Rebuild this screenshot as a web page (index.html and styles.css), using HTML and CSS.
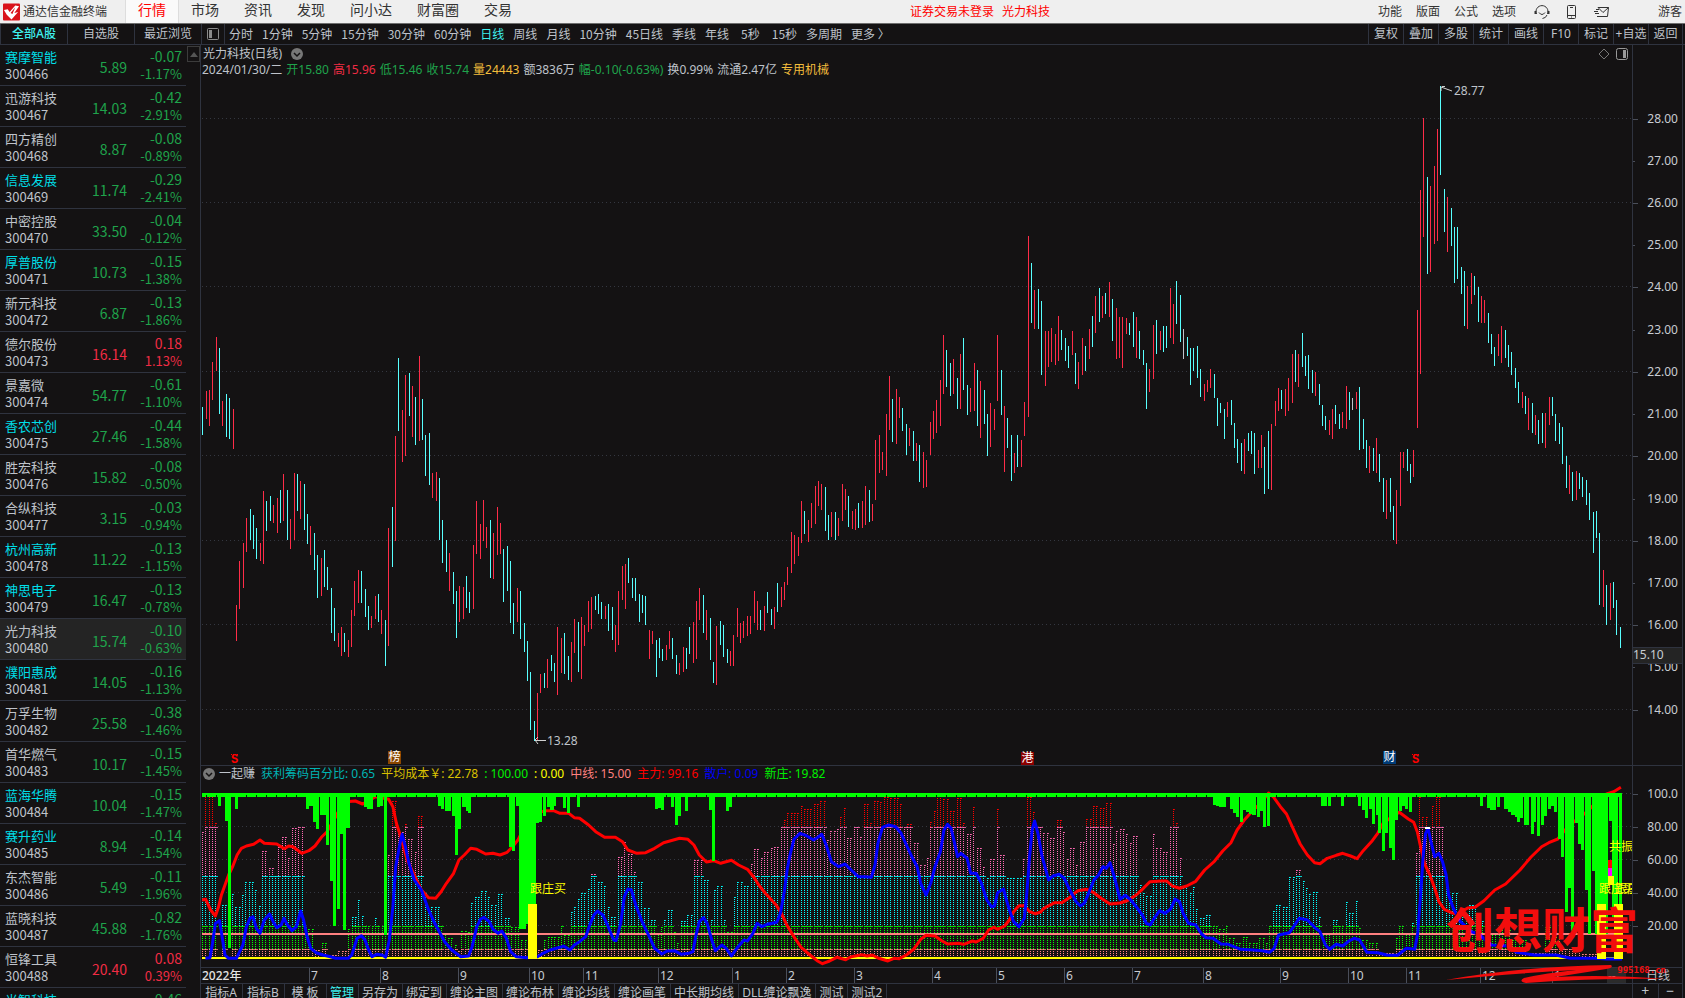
FILE: index.html
```html
<!DOCTYPE html>
<html lang="zh-CN">
<head>
<meta charset="utf-8">
<title>通达信金融终端</title>
<link rel="stylesheet" href="styles.css">
</head>
<body>
<div class="app">
  <header class="topbar">
    <div class="brand">
      <svg class="logo" viewBox="0 0 18 18"><rect width="18" height="18" rx="1" fill="#d9121a"/><path d="M1 7 5 6 7 9 13 2 17 3 12 10 16 9 9 17 4 12Z" fill="#fff"/><path d="M8 10 13 4 10 11Z" fill="#d9121a"/></svg>
      <span>通达信金融终端</span>
    </div>
    <nav class="menu">
      <a href="#" class="on">行情</a><a href="#">市场</a><a href="#">资讯</a><a href="#">发现</a><a href="#">问小达</a><a href="#">财富圈</a><a href="#">交易</a>
    </nav>
    <div class="notice"><span>证券交易未登录</span><span>光力科技</span></div>
    <div class="tools">
      <button>功能</button><button>版面</button><button>公式</button><button>选项</button>
    </div>
    <div class="icons">
      <button aria-label="客服"><svg width="16" height="16" viewBox="0 0 16 16" fill="none" stroke="#333"><path d="M2.500 10a6 6 0 1 1 11 0M13 11q-1 3-4.500 3.500M5 8.500q3 4 6 0"/><path d="M1.500 7v3M14.500 7v3" stroke-width="2"/></svg></button>
      <button aria-label="手机"><svg width="16" height="16" viewBox="0 0 16 16" fill="none" stroke="#333"><rect x="3.500" y="1.500" width="8" height="13" rx="1"/><path d="M3.500 11.500h8M6 3.500h3M7 13h1"/></svg></button>
      <button aria-label="邮件"><svg width="16" height="16" viewBox="0 0 16 16" fill="none" stroke="#333"><path d="M4 3.500h10.500l-1 9H3M4 3.500l5 5 5.500-5M0 7.500h4M2 5.500h3M1 9.500h4"/></svg></button>
    </div>
    <a href="#" class="guest">游客</a>
  </header>

  <div class="toolbar">
    <div class="side-tabs"><button class="on">全部A股</button><button>自选股</button><button>最近浏览</button></div>
    <button class="panel-toggle" aria-label="侧栏"><svg width="12" height="12" viewBox="0 0 12 12"><rect x=".5" y=".5" width="11" height="11" rx="1" fill="none" stroke="#8a8a8a"/><path d="M2 2h3v8H2z" fill="#8a8a8a"/></svg></button>
    <nav class="periods">
      <button>分时</button><button>1分钟</button><button>5分钟</button><button>15分钟</button><button>30分钟</button><button>60分钟</button><button class="on">日线</button><button>周线</button><button>月线</button><button>10分钟</button><button>45日线</button><button>季线</button><button>年线</button><button class="sec">5秒</button><button class="sec">15秒</button><button>多周期</button><button>更多 〉</button>
    </nav>
    <div class="actions"><button>复权</button><button>叠加</button><button>多股</button><button>统计</button><button>画线</button><button>F10</button><button>标记</button><button>+自选</button><button>返回</button></div>
  </div>

  <main class="work">
    <aside class="sidebar">
      <table class="stocks"><tbody id="stocks"></tbody></table>
      <button class="scroll-up" aria-label="向上滚动"><svg width="8" height="5" viewBox="0 0 8 5"><path d="M4 0 8 5H0z" fill="#555"/></svg></button>
    </aside>

    <section class="charts">
      <div class="price pane">
        <svg class="plot" id="price" viewBox="0 0 1431 720" preserveAspectRatio="none"></svg>
        <div class="labels" id="price-labels"></div>
        <div class="head">
          <div class="title"><span>光力科技(日线)</span><button aria-label="展开" class="round"><svg width="12" height="12" viewBox="0 0 12 12"><circle cx="6" cy="6" r="6" fill="#777"/><path d="M3 5l3 3 3-3" fill="none" stroke="#141213" stroke-width="1.500"/></svg></button></div>
          <div class="corner"><svg width="12" height="12" viewBox="0 0 12 12"><path d="M6 1l5 5-5 5-5-5z" fill="none" stroke="#777"/></svg><svg width="12" height="12" viewBox="0 0 12 12"><rect x=".5" y=".5" width="11" height="11" rx="2" fill="none" stroke="#999"/><path d="M7 2h3v8H7z" fill="#999"/></svg></div>
        </div>
        <div class="quote"><span>2024/01/30/二</span><span class="down">开15.80</span><span class="up">高15.96</span><span class="down">低15.46</span><span class="down">收15.74</span><span class="gold">量24443</span><span>额3836万</span><span class="down">幅-0.10(-0.63%)</span><span>换0.99%</span><span>流通2.47亿</span><span class="gold">专用机械</span></div>
      </div>
      <div class="scale price-scale" id="price-scale"></div>

      <div class="indicator pane">
        <svg class="plot" id="indicator" viewBox="0 0 1431 201" preserveAspectRatio="none"></svg>
        <div class="labels" id="indicator-labels"></div>
        <div class="legend"><button aria-label="展开" class="round"><svg width="12" height="12" viewBox="0 0 12 12"><circle cx="6" cy="6" r="6" fill="#777"/><path d="M3 5l3 3 3-3" fill="none" stroke="#141213" stroke-width="1.500"/></svg></button><span>一起赚</span><span class="teal">获利筹码百分比: 0.65</span><span class="mustard">平均成本￥: 22.78</span><span class="lime">: 100.00</span><span class="yellow">: 0.00</span><span class="salmon">中线: 15.00</span><span class="red">主力: 99.16</span><span class="blue">散户: 0.09</span><span class="lime">新庄: 19.82</span></div>
      </div>
      <div class="scale indicator-scale" id="indicator-scale"></div>

      <div class="dates" id="dates"></div>
      <div class="period-name">日线</div>

      <nav class="templates"><button class="wide">指标A</button><button class="wide">指标B</button><button class="wide">模 板</button><button class="on">管理</button><button>另存为</button><button>绑定到</button><button>缠论主图</button><button>缠论布林</button><button>缠论均线</button><button>缠论画笔</button><button>中长期均线</button><button>DLL缠论飘逸</button><button>测试</button><button>测试2</button></nav>
      <div class="zoomers"><button>+</button><button>−</button></div>

      <div class="stamp">
        <svg class="swoosh" viewBox="0 0 220 20" preserveAspectRatio="none"><path d="M0 16Q80 2 165 1 168 4 160 5 130 10 108 13 160 10 220 15 150 14 80 19 72 17 78 14 100 9 130 6 60 10 0 16Z" fill="#f20d0d"/></svg>
        <span class="stamp-name">创想财富</span><span class="stamp-site">995168.cn</span>
      </div>
    </section>
    <div class="edge"></div>
  </main>
</div>
<script src="app.js"></script>
</body>
</html>
```
FILE: styles.css
```css
* { box-sizing: border-box; }
:root {
  --bg: #141213;
  --line: #2f333f;
  --text: #bfc3ca;
  --up: #f02c44;
  --down: #1fa34b;
  --cyan: #3ff0ee;
}
html, body { margin: 0; height: 100%; overflow: hidden; }
body {
  background: var(--bg);
  color: var(--text);
  font: 12px/16px "Noto Sans", "Noto Sans CJK SC", sans-serif;
}
button {
  margin: 0; padding: 0; border: 0;
  background: none; color: inherit; font: inherit; white-space: nowrap;
}
a { color: inherit; text-decoration: none; }
svg { display: block; }
.app { height: 100vh; display: flex; flex-direction: column; }

.topbar {
  flex: none; height: 24px; display: flex; align-items: center;
  background: #efefef; color: #333; border-bottom: 1px solid #6d6d6d;
}
.brand { flex: none; width: 125px; padding-left: 3px; display: flex; align-items: center; gap: 3px; line-height: 20px; }
.logo { width: 17px; height: 18px; }
.menu { display: flex; height: 100%; font-size: 14px; line-height: 20px; }
.menu a { padding: 0 13px 0 12px; }
.menu .on { padding-left: 13px; background: #fafafa; color: #f00; box-shadow: inset 1px 0 #ddd, inset -1px 0 #ddd; }
.notice { margin-left: auto; display: flex; gap: 8px; color: #f00; }
.tools { margin-left: 328px; display: flex; gap: 14px; }
.icons { display: flex; gap: 14px; margin-left: 18px; }
.guest { margin: 0 3px 0 48px; }

.toolbar { flex: none; height: 21px; display: flex; border-bottom: 1px solid var(--line); }
.toolbar button { padding-bottom: 1px; }
.side-tabs { width: 201px; display: grid; grid-template-columns: repeat(3, 1fr); }
.side-tabs button { border-left: 1px solid var(--line); }
.side-tabs .on { color: var(--cyan); font-weight: 500; }
.toolbar .panel-toggle { width: 24px; padding-left: 5px; border: solid var(--line); border-width: 0 1px; }
.periods { display: flex; gap: 9px; padding-left: 4px; font-family: "Noto Sans CJK SC", sans-serif; }
.periods .on { color: var(--cyan); }
.periods .sec { padding-left: 3px; }
.actions { margin: 0 2px 0 auto; display: grid; grid-template-columns: repeat(9, 35px); }
.actions button { border-left: 1px solid var(--line); }
.actions button:last-child { border-right: 1px solid var(--line); }

.work { flex: 1; min-height: 0; display: flex; }
.sidebar { flex: none; width: 201px; overflow: hidden; display: flex; align-items: flex-start; border-right: 1px solid var(--line); }
.stocks { width: 186px; border-collapse: separate; border-spacing: 0; table-layout: fixed; font-family: "Noto Sans CJK SC", sans-serif; }
.stocks tr { height: 41px; }
.stocks td { padding: 0; vertical-align: middle; border-bottom: 1px solid var(--line); }
.stocks .who { width: 80px; padding: 0 0 1px 5px; font-size: 13px; line-height: 17px; }
.stocks .price-cell { width: 47px; font-size: 14px; line-height: 20px; text-align: right; padding-top: 4px; }
.stocks .move { padding: 0 4px 1px 0; font-size: 14px; line-height: 18px; text-align: right; }
.stocks .pct { font-size: 13px; }
.stocks .who div, .stocks .move div { white-space: nowrap; }
.hot { color: #00dfe8; }
.selected { background: #242424; }
.up { color: var(--up); }
.down { color: var(--down); }
.gold { color: #f3bd3c; }
.teal { color: #00b4b4; }
.mustard { color: #d9c000; }
.lime { color: #00f000; }
.yellow { color: #ff0; }
.salmon { color: #ff8080; }
.red { color: #f00; }
.blue { color: #0000f0; }
.scroll-up { width: 13px; height: 16px; margin: 1px 0 0 1px; border: 1px solid #3c3c3c; display: grid; place-items: center; }

.charts {
  flex: 1; min-width: 0; position: relative; display: grid;
  grid-template: minmax(0, 720fr) minmax(0, 202fr) 17px 14px / minmax(0, 1fr) 51px;
}
.pane { position: relative; overflow: hidden; }
.plot { position: absolute; inset: 0; width: 100%; height: 100%; }
.labels { position: absolute; inset: 0; }
.labels span { position: absolute; white-space: nowrap; line-height: 16px; margin-top: -8px; }
.labels .badge { width: 13px; height: 13px; margin: 0; color: #fff; text-align: center; line-height: 12px; }
.brown { background: #8a4600; }
.maroon { background: #8a0000; }
.navy { background: #003c78; }
.labels .bonus { color: #f00; font: bold 12px/10px "Liberation Mono", monospace; margin: 0; border-top: 1px dotted #f00; }
.head { position: relative; display: flex; justify-content: space-between; padding: 1px 4px 0 2px; }
.title { display: flex; align-items: center; gap: 9px; }
.corner { display: flex; align-items: center; gap: 6px; }
.quote { position: relative; display: flex; gap: 4px; padding-left: 1px; white-space: nowrap; }
.legend { position: relative; display: flex; align-items: center; gap: 6px; padding-left: 2px; white-space: nowrap; }
.legend .round { margin-right: -2px; }
.indicator { border-top: 1px solid var(--line); }
.scale { position: relative; overflow: hidden; border: 0 solid var(--line); border-width: 0 1px; color: #c8ccd2; }
.indicator-scale { border-top-width: 1px; }
.scale span { position: absolute; right: 4px; margin-top: -8px; line-height: 16px; }
.scale i { position: absolute; left: 0; width: 5px; height: 1px; background: #4a4e59; }
.scale i.minor { width: 2px; }
.scale .last { left: 0; right: 0; height: 17px; margin-top: -8px; border: solid var(--line); border-width: 1px 0; background: #242424; line-height: 14px; }
.dates { position: relative; overflow: hidden; border: solid var(--line); border-width: 1px 0; color: #c8ccd2; }
.dates span { position: absolute; height: 16px; line-height: 15px; padding-left: 1px; border-left: 1px solid #4a4e59; }
.dates .year { border: 0; color: #e4e4e4; font-weight: 500; }
.dates .cursor { width: 19px; border: 0; background: #2b2b2b; }
.period-name { border: 1px solid var(--line); padding-left: 13px; line-height: 15px; }
.templates { display: flex; overflow: hidden; }
.templates button { height: 18px; padding: 0 4px 0 3px; border-right: 1px solid var(--line); line-height: 16px; }
.templates .wide { width: 42px; }
.templates .on { color: var(--cyan); }
.zoomers { display: grid; grid-template-columns: 1fr 1fr; overflow: hidden; border: 0 solid var(--line); border-width: 0 1px; }
.zoomers button { height: 14px; line-height: 14px; font-size: 14px; }
.zoomers button + button { border-left: 1px solid var(--line); }
.edge { flex: none; width: 2px; }

.stamp { position: absolute; right: 1px; bottom: 14px; width: 236px; height: 84px; color: #f20d0d; }
.stamp-name { position: absolute; left: 0; top: 0; font-size: 48px; font-weight: 700; line-height: 60px; white-space: nowrap; }
.stamp-site { position: absolute; right: 16px; top: 63px; font: bold 9px/14px "DejaVu Sans Mono", monospace; }
.swoosh { position: absolute; left: 0; bottom: 0; width: 220px; height: 20px; }
```
FILE: app.js
```javascript
const NS = 'http://www.w3.org/2000/svg';
const byId = id => document.getElementById(id);

/* Stock list: name, price, change, percent; * marks a highlighted name. */
const stocks = `*赛摩智能 5.89 -0.07 -1.17%|迅游科技 14.03 -0.42 -2.91%|四方精创 8.87 -0.08 -0.89%|*信息发展 11.74 -0.29 -2.41%|中密控股 33.50 -0.04 -0.12%|*厚普股份 10.73 -0.15 -1.38%|新元科技 6.87 -0.13 -1.86%|德尔股份 16.14 0.18 1.13%|景嘉微 54.77 -0.61 -1.10%|*香农芯创 27.46 -0.44 -1.58%|胜宏科技 15.82 -0.08 -0.50%|合纵科技 3.15 -0.03 -0.94%|*杭州高新 11.22 -0.13 -1.15%|*神思电子 16.47 -0.13 -0.78%|光力科技 15.74 -0.10 -0.63%|*濮阳惠成 14.05 -0.16 -1.13%|万孚生物 25.58 -0.38 -1.46%|首华燃气 10.17 -0.15 -1.45%|*蓝海华腾 10.04 -0.15 -1.47%|*赛升药业 8.94 -0.14 -1.54%|东杰智能 5.49 -0.11 -1.96%|蓝晓科技 45.88 -0.82 -1.76%|恒锋工具 20.40 0.08 0.39%|*光智科技 19.62 -0.46 -2.29%`;
byId('stocks').innerHTML = stocks.split('|').map((row, i) => {
  const [name, price, diff, pct] = row.split(' ');
  const hot = name[0] === '*';
  const dir = diff[0] === '-' ? 'down' : 'up';
  const code = 300466 + i;
  return `<tr class="${code === 300480 ? 'selected' : ''}"><td class="who"><div class="${hot ? 'hot' : ''}">${name.replace('*', '')}</div><div>${code}</div></td><td class="price-cell ${dir}">${price}</td><td class="move ${dir}"><div>${diff}</div><div class="pct">${pct}</div></td></tr>`;
}).join('');

/* Series are stored in blocks; each has an origin and a number of units per pixel. */
const LEFT = 201;
const blocks = (list, top) => list.flatMap(b => b.data.trim().split(/\s*,\s*/).map(s => {
  const m = s.match(/^([a-z]?)(.*)$/);
  const n = m[2].trim().split(/\s+/).map(Number);
  return { kind: m[1], n, x: v => b.x - LEFT + v / b.k, y: v => b.y - top + v / 3 };
}));
function path(svg, d, attrs) {
  const p = document.createElementNS(NS, 'path');
  p.setAttribute('d', d);
  for (const k in attrs) p.setAttribute(k, attrs[k]);
  svg.appendChild(p);
}

/* Price pane */
const price = byId('price');
const priceY = v => 118.5 - 45 + (28 - v) * 42.23;
for (let v = 28; v >= 14; v -= 2) path(price, `M1 ${Math.round(priceY(v)) - .5}H1431`, { stroke: '#343740', 'stroke-dasharray': '1 3' });
const bars = blocks([
{ x: 0, y: 320, k: 2.8, data: `c567 261 345,r578 213 297,r586 210 318,r595 126 240,r606 51 153,c614 84 282,r623 243 318,c634 222 351,c642 234 357,r653 267 387,r662 855 963,r670 723 867,r681 669 804,r690 594 696,c701 567 660,c709 585 687,c718 624 717,r729 669 723,r738 513 732,c746 543 633,c757 528 603,r765 555 609,r777 534 639,c785 510 609,r793 462 603,c805 510 660,r813 597 687,r824 459 660,c832 462 573,r841 483 597,c852 492 630,c861 582 672,r869 618 705,c880 639 750,c889 705 834,r900 714 828,c908 690 801,c917 741 810,c928 804 939,c936 864 963,r947 939 981,r956 921 1008,c964 939 996,r975 960 1011,r984 870 981,r992 783 888,r1003 750 849,c1012 753 849,c1023 807 891,c1031 858 930,r1040 888 924,r1051 828 897,c1059 822 906,r1068 870 942,c1079 900 1038,r1087 624 978,c1099 561 741,r1107 348 663,c1115 114 333,r1127 270 426,r1135 165 408,c1146 159 288,r1155 198 351,c1163 231 375,r1174 108 363,c1183 237 360,c1191 345 468,c1202 339 495,r1211 459 534,r1222 456 543,c1230 474 660,c1239 600 729,c1250 660 756,r1258 699 813,c1269 756 852,c1278 813 954,r1286 798 906,r1297 801 897,c1306 768 864,c1314 816 879,r1325 675 867,r1334 543 702,r1345 612 717,r1353 540 663,r1362 621 684,c1373 600 774,r1381 639 777,r1393 561 705,r1401 609 702,c1409 687 846,c1421 678 813,c1429 723 909,c1437 849 942,r1449 804 906,c1457 813 957,c1468 909 996,c1477 963 1083,c1485 1056 1230,c1496 1203 1263,r1505 1119 1260,r1513 1062 1119,c1524 1059 1104,r1532 1017 1104,c1544 1005 1053,c1552 1029 1086,r1561 921 1125` },
{ x: 560, y: 400, k: 2.8, data: `r4 714 819,c12 699 822,c24 768 840,r32 726 846,r40 657 759,c51 666 816,r60 651 837,r68 675 738,r79 603 696,r88 591 687,c99 588 630,c107 582 642,c116 606 657,r127 618 657,c135 612 693,c147 621 720,r155 675 756,r163 573 735,r175 498 600,r183 492 627,c191 474 549,c203 534 594,c211 534 603,c222 582 666,c231 585 639,c239 588 675,r250 690 777,r259 693 732,c270 720 831,c278 714 774,c287 747 783,r298 735 780,r306 693 747,c315 714 777,c326 765 822,r334 789 825,r345 741 816,c354 744 807,c362 681 762,r373 666 789,r382 603 777,r390 564 660,c401 585 699,r410 630 720,c421 654 780,c429 786 849,r438 678 855,c449 663 735,c457 675 771,c469 747 789,r477 753 798,r485 705 798,r497 624 711,r505 669 729,r513 663 714,r525 648 708,r533 648 702,r544 573 669,r553 603 690,c561 630 690,r572 618 693,c580 576 639,c592 627 675,r600 621 687,c609 549 636,r620 561 621,r628 546 600,r637 501 555,r648 396 519,r656 405 492,r667 411 468,r676 303 429,c684 333 402,r695 360 426,r704 309 384,r715 258 372,r723 243 318,r732 252 330,c743 261 393,c751 345 420,r760 336 411,c771 336 420,r779 354 408,r790 252 363,r799 267 330,c807 288 381,r818 333 387,r827 327 390,c835 309 384,r847 303 384,r855 258 375,c866 270 366,r874 312 363,r883 120 300,r894 105 219,r903 156 210,r914 42 228,r922 -72 90,c931 -3 126,r942 -33 132,r950 -9 54,c959 24 93,c970 72 165,r978 84 138,c989 93 183,r998 129 183,c1006 135 246,r1017 156 264,r1026 180 261,r1037 66 165,r1045 33 117,r1054 0 99,r1065 -60 78,r1074 -195 -18,c1082 -150 -39,c1093 -111 -12,r1101 -123 -18,c1113 -66 27,r1121 -138 27,c1129 -186 -30,c1141 -45 45,r1149 -36 36,r1160 -111 33,c1169 -90 78,r1177 -57 114,c1188 -30 72,c1197 42 168,r1205 9 141,r1216 27 90,r1225 -195 3,c1236 -90 45,r1244 18 216,c1253 54 144,c1264 105 243,r1272 159 219,c1281 105 201,r1292 120 201,r1300 6 108,r1311 -492 51,c1320 -411 -231,r1328 -330 -213,c1339 -333 -213,c1348 -297 -75,r1359 -207 -42,r1367 -207 -99,r1376 -216 -114,r1387 -198 -105,r1395 -252 -117,c1404 -210 -150,c1415 -186 -117,c1423 -162 -96,r1435 -207 -135,c1443 -141 -48,r1451 -114 -33,r1463 -186 -75,c1471 -162 -87,r1482 -213 -123,c1491 -252 -159,r1499 -312 -201,c1510 -336 -234,r1519 -312 -246,c1527 -321 -258,r1538 -354 -249,c1547 -303 -177,r1558 -276 -123,r1566 -249 -126` },
{ x: 1120, y: 300, k: 2.775, data: `r7 51 204,r18 54 102,c26 69 105,c37 36 141,r45 51 174,c54 93 177,c65 150 195,c73 189 327,r81 207 276,r93 75 237,c101 60 162,r112 93 150,c120 78 156,c128 78 144,r140 -36 114,r148 12 132,c156 -57 72,c167 -15 126,w176 87 177,c187 111 168,c195 144 255,c204 144 213,c215 138 234,c223 207 291,r234 252 303,r242 240 276,r251 207 264,c262 222 294,c270 294 378,c279 309 339,c290 327 417,r298 306 351,c309 300 375,c317 369 444,c326 417 489,c337 429 513,r345 417 522,c356 399 453,c365 393 462,c373 399 522,r384 450 504,r392 405 504,c401 441 582,c412 393 567,r420 372 570,r431 303 378,r439 264 333,c448 270 327,r459 267 348,r467 234 333,r478 162 309,c487 150 246,r495 162 261,c506 99 201,c514 168 228,c523 165 267,c534 210 279,r542 216 288,c553 252 315,c562 315 378,c570 348 390,r581 360 405,r589 327 417,c598 315 372,c609 342 387,r617 336 384,r628 258 387,c637 276 360,w645 294 330,r656 276 327,c664 261 450,c675 357 447,c684 420 504,r692 438 519,c703 444 513,r711 414 519,c720 462 546,c731 534 636,r739 540 657,c750 534 636,c759 618 720,r767 570 732,r778 456 618,r786 456 504,c797 447 513,c806 492 549,r814 450 531,r825 30 384,r834 -330 222,r842 -546 -189,c853 -369 -78,r862 -342 -84,r873 -402 -168,r881 -513 -177,c889 -642 -375,c900 -333 -204,r909 -309 -144,c920 -276 -162,c928 -219 -51,c937 -219 -63,c948 -99 -18,c956 -87 78,r965 -42 87,r975 -81 12,c984 -72 -15,c995 -39 66,r1003 -12 69,r1011 0 69,c1022 39 129,c1031 102 162,c1039 141 198,r1050 102 168,r1058 78 189,c1069 90 174,c1078 135 201,c1086 156 225,c1097 204 264,c1106 246 309,r1117 276 324,c1125 288 342,r1133 294 390,c1144 309 399,r1153 345 405,c1161 360 432,c1172 339 429,r1180 339 444,r1192 291 375,c1200 291 348,c1208 342 423,c1219 369 432,c1228 381 492,c1239 468 564,r1247 495 582,c1255 516 603,r1267 513 600,c1275 519 567,c1283 531 591,c1294 540 615,c1303 579 660,c1314 636 759,c1322 633 714,c1330 699 915,r1341 810 921,c1350 855 975,r1361 849 960,c1369 846 924,c1378 900 1005,c1389 981 1044` }
], 45);
const tint = { r: '#ff2c48', c: '#58ffff', w: '#c0c4cc' };
for (const kind in tint) {
  path(price, bars.filter(b => b.kind === kind).map(b => `M${Math.floor(b.x(b.n[0])) + .5} ${Math.round(b.y(b.n[1]))}V${Math.round(b.y(b.n[2]))}`).join(''), { stroke: tint[kind] });
}
path(price, 'M1241 41.500h3M1240 42l11 4M1240 42v4M334 695.500h11M337 692l-3 3 3 4', { stroke: '#d0d0d0', fill: 'none' });

const place = (id, w, h, top, items) => {
  byId(id).innerHTML = items.map(([x, y, text, cls = '']) =>
    `<span class="${cls}" style="left:${(x - LEFT) / w * 100}%;top:${(y - top) / h * 100}%">${text}</span>`).join('');
};
place('price-labels', 1431, 720, 45, [
  [1454, 91, '28.77'], [547, 741, '13.28'],
  [388, 751, '榜', 'badge brown'], [1021, 752, '港', 'badge maroon'], [1383, 751, '财', 'badge navy'],
  [231, 754, 'S', 'bonus'], [1412, 754, 'S', 'bonus']
]);
let scale = '';
for (let v = 28; v >= 14; v--) {
  const t = priceY(v) / 720 * 100;
  scale += `<i class="${v % 2 ? 'minor' : ''}" style="top:${t}%"></i><span style="top:${t}%">${v}.00</span>`;
}
byId('price-scale').innerHTML = scale + `<span class="last" style="top:${(655 - 45) / 7.2}%">15.10</span>`;

/* Indicator pane */
const ind = byId('indicator');
const TOP = 766;
const indY = v => 192.5 - v * 1.645;
[100, 80, 60, 40, 20].forEach(v => path(ind, `M1 ${Math.round(indY(v)) - .5}H1431`, { stroke: '#343740', 'stroke-dasharray': '1 3' }));

/* Profit columns: start, end, top edge */
const steps = blocks([
{ x: 0, y: 660, k: 2.8, data: `566 576 516,576 603 405,603 613 490,622 635 735,648 660 702,660 672 740,675 683 706,683 707 667,707 718 690,718 731 738,731 753 573,753 766 624,766 777 645,777 786 560,786 800 531,800 816 594,816 836 504,836 848 498,848 858 800,858 875 808,875 893 870,893 915 850,915 947 885,947 975 873,975 985 808,985 998 771,998 1010 720,1010 1020 768,1020 1045 798,1045 1056 774,1056 1084 797,1084 1094 585,1094 1113 423,1113 1127 516,1127 1141 492,1141 1155 537,1155 1167 576,1167 1182 468,1182 1191 700,1191 1205 760,1205 1230 741,1230 1240 795,1240 1250 820,1250 1266 835,1266 1275 855,1275 1290 873,1290 1305 813,1305 1318 816,1318 1328 730,1328 1345 711,1345 1360 693,1360 1370 711,1370 1394 735,1394 1408 702,1408 1428 774,1428 1455 801,1455 1478 840,1478 1520 869,1520 1535 840,1535 1568 830` },
{ x: 560, y: 740, k: 2.8, data: `0 10 553,10 25 586,25 35 515,35 50 500,50 60 477,60 72 458,72 82 446,82 106 402,106 117 425,117 133 438,133 142 500,142 155 530,155 175 352,175 190 305,190 207 342,207 217 395,217 228 425,228 237 433,237 247 505,247 267 541,267 280 580,280 290 562,290 300 541,300 313 511,313 322 575,322 338 610,338 357 543,357 368 525,368 376 478,376 398 360,398 416 421,416 430 541,430 442 450,442 455 438,455 463 541,463 480 575,480 490 470,490 515 425,515 527 437,527 543 373,543 560 328,560 572 355,572 585 335,585 597 325,597 613 320,613 622 257,622 632 240,632 668 218,668 683 197,683 708 207,708 723 192,723 740 184,740 752 300,752 775 273,775 783 268,783 790 230,790 804 204,804 820 295,820 834 255,834 847 290,847 862 192,862 875 250,875 896 182,896 907 187,907 923 172,923 948 175,948 957 193,957 970 260,970 986 253,986 1005 308,1005 1020 375,1020 1030 355,1030 1040 245,1040 1055 212,1055 1075 168,1075 1090 178,1090 1112 213,1112 1127 175,1127 1137 250,1137 1152 283,1152 1167 202,1167 1183 325,1183 1194 380,1194 1205 415,1205 1217 357,1217 1232 208,1232 1252 345,1252 1292 415,1292 1305 357,1305 1318 172,1318 1328 217,1328 1350 257,1350 1373 280,1373 1390 295,1390 1403 240,1403 1412 277,1412 1427 358,1427 1441 323,1441 1456 375,1456 1475 307,1475 1490 237,1490 1505 197,1505 1530 203,1530 1545 190,1545 1555 312,1555 1568 273` },
{ x: 1120, y: 640, k: 2.775, data: `0 13 568,13 25 583,25 37 610,37 52 588,52 60 735,60 70 760,70 86 768,86 98 583,98 115 625,115 131 637,131 142 562,142 155 508,155 163 550,163 175 655,175 187 738,187 197 760,197 210 742,210 222 808,222 235 835,235 257 826,257 270 857,270 290 868,290 305 857,305 320 893,320 340 910,340 357 892,357 385 910,385 398 893,398 414 910,414 424 852,424 433 812,433 446 795,446 471 800,471 487 711,487 502 691,502 514 723,514 525 745,525 535 763,535 548 755,548 560 830,560 583 880,583 605 840,605 621 857,621 635 787,635 648 820,648 662 783,662 673 865,673 690 900,690 718 910,718 760 940,760 773 895,773 793 857,793 808 880,808 818 850,818 827 640,827 840 470,840 850 530,850 863 565,863 875 498,875 887 470,887 896 562,896 913 710,913 922 790,922 935 760,935 945 810,945 968 830,968 990 795,990 1003 860,1003 1020 842,1020 1053 880,1053 1065 855,1065 1085 870,1085 1135 900,1135 1180 940,1180 1195 862,1195 1225 890,1225 1275 925,1275 1320 942` }
], TOP).map(b => [b.x(b.n[0]), b.x(b.n[1]), b.y(b.n[2])]);
const zones = [[0, 6, '#ff8484'], [6, 20, '#00ff00'], [20, 50, '#00ffff'], [50, 80, '#ff69b4'], [80, 101, '#ff0000']];
for (const [lo, hi, color] of zones) {
  let cols = '', caps = '';
  for (let i = 0; i < 430; i++) {
    const x = 1.5 + i * 3.325, s = steps.find(t => x >= t[0] && x < t[1]);
    if (!s || s[2] > indY(lo) - 2) continue;
    const top = Math.round(Math.max(s[2], indY(hi)));
    cols += `M${Math.floor(x) + .5} ${top}V${Math.round(indY(lo))}`;
    if (s[2] > indY(hi)) caps += `M${Math.floor(x)} ${top + .5}h2`;
    else caps += `M${Math.floor(x) + 1} ${Math.round(indY(hi)) + .5}h2`;
  }
  path(ind, cols, { stroke: color, 'stroke-dasharray': '1 1' });
  path(ind, caps, { stroke: color, opacity: .8 });
}

path(ind, 'M1 168H1422', { stroke: '#ff8080', 'stroke-width': 2 });
path(ind, 'M1 192H1422', { stroke: '#ff0', 'stroke-width': 2 });
const line = (data, color) => path(ind, 'M' + blocks(data, TOP).map(b => `${b.x(b.n[0]).toFixed(1)} ${b.y(b.n[1]).toFixed(1)}`).join('L'), { stroke: color, fill: 'none', 'stroke-width': 3, 'stroke-linejoin': 'round' });
line([
{ x: 0, y: 660, k: 2.8, data: `566 720,576 718,590 750,603 768,612 740,620 705,640 645,652 618,664 585,676 565,690 558,710 553,728 540,740 550,775 552,796 566,808 558,820 560,845 580,865 572,882 558,900 532,915 516,935 480,950 450,968 425,995 423,1015 432,1030 425,1050 410,1075 415,1088 418,1100 440,1110 490,1122 530,1140 600,1160 645,1180 690,1200 713,1220 715,1235 695,1250 670,1270 640,1285 600,1300 585,1318 565,1335 568,1360 582,1380 580,1400 585,1420 577,1435 560,1450 540,1465 510,1480 480,1500 458,1530 452,1550 452` },
{ x: 560, y: 740, k: 2.8, data: `0 220,25 220,40 233,55 235,80 255,100 275,125 292,155 292,175 305,190 330,215 340,240 338,265 325,290 308,335 295,358 298,375 315,390 345,410 366,430 362,450 370,480 361,500 375,525 388,545 415,555 433,575 460,605 495,620 520,635 555,655 590,675 622,700 645,720 662,735 671,755 663,775 652,800 659,815 650,845 644,860 648,875 645,890 654,918 663,935 655,950 656,970 645,990 628,1010 598,1025 586,1050 588,1070 603,1085 612,1115 610,1130 613,1155 603,1165 606,1185 595,1200 570,1215 562,1225 568,1245 558,1258 540,1270 515,1285 497,1300 497,1315 515,1330 521,1345 517,1355 505,1385 488,1405 488,1430 470,1450 452,1475 448,1495 458,1515 475,1540 492` },
{ x: 1120, y: 640, k: 2.775, data: `0 789,20 782,45 765,65 745,83 725,115 723,130 723,145 738,165 745,185 738,210 724,235 690,262 664,285 633,308 608,325 570,345 540,370 510,395 485,412 459,425 470,445 500,462 522,480 565,500 612,520 645,540 668,555 671,575 655,600 646,618 640,640 648,658 656,675 632,700 602,715 580,730 550,755 530,775 517,800 537,815 547,825 575,835 625,845 670,860 705,875 750,885 785,900 808,920 818,935 822,950 814,965 804,985 802,1010 782,1040 750,1070 732,1110 690,1140 652,1170 620,1190 608,1215 597,1235 570,1260 545,1290 520,1310 500,1330 475,1350 462,1370 455,1390 442` }
], '#f00');

/* Hanging bars: start, end, lower edge */
const hang = blocks([
{ x: 0, y: 660, k: 2.8, data: `609 619 438,630 638 483,637 647 864,657 666 447,857 866 447,866 875 438,875 885 486,885 893 507,897 913 465,913 921 555,924 932 663,932 941 798,944 952 747,952 960 522,960 969 810,969 980 504,1019 1027 441,1027 1043 447,1056 1064 441,1064 1072 438,1075 1084 825,1227 1236 438,1236 1244 447,1246 1263 453,1266 1274 468,1274 1282 585,1282 1291 507,1293 1305 441,1305 1311 453,1311 1319 459,1425 1434 561,1434 1442 573,1445 1453 438,1453 1473 807,1473 1480 792,1480 1501 735,1501 1510 489,1510 1518 486,1520 1529 468,1532 1540 441,1540 1550 450,1550 1558 438` },
{ x: 560, y: 740, k: 2.8, data: `8 17 204,20 28 219,48 56 201,266 274 207,274 282 204,282 291 210,311 319 201,322 330 255,330 338 228,350 358 213,417 426 210,426 434 363,465 473 213,473 482 201` },
{ x: 1120, y: 640, k: 2.775, data: `258 266 495,266 275 498,275 294 501,305 313 507,313 321 519,321 330 531,333 341 546,341 349 510,349 357 516,357 365 522,365 377 525,380 388 531,388 396 513,397 405 561,407 416 558,558 574 498,577 585 498,613 622 498,661 669 498,672 680 510,680 688 534,691 699 507,699 708 552,711 716 525,716 724 579,727 735 633,735 744 579,747 755 624,755 763 660,763 771 540,774 782 513,782 791 498,791 799 507,802 810 516,999 1007 498,1019 1027 504,1027 1043 510,1046 1054 501,1066 1078 507,1078 1086 516,1086 1095 525,1095 1102 531,1102 1110 546,1110 1118 534,1121 1134 555,1141 1149 582,1149 1155 546,1157 1165 588,1168 1176 555,1176 1184 528,1188 1196 507,1196 1204 498,1204 1213 516,1216 1223 597,1223 1232 651,1235 1243 816,1243 1251 744,1251 1259 879,1262 1271 549,1271 1279 612,1279 1287 630,1290 1299 750,1299 1307 882,1309 1318 693,1318 1326 882,1326 1349 792,1349 1353 882,1357 1365 543,1365 1373 830,1373 1382 792,1385 1393 792` }
], TOP);
let d = 'M1 27H1421V31H1V27Z';
hang.forEach(b => { d += `M${Math.round(b.x(b.n[0]))} 27H${Math.round(b.x(b.n[1]))}V${Math.round(b.y(b.n[2]))}H${Math.round(b.x(b.n[0]))}Z`; });
path(ind, d, { fill: '#0f0', 'fill-rule': 'nonzero' });
let ticks = '';
for (let x = 5; x < 1420; x += 10) if (!hang.some(b => x >= b.x(b.n[0]) - 1 && x <= b.x(b.n[1]) + 1)) ticks += `M${x + .5} 29v2`;
path(ind, ticks, { stroke: '#141213' });

line([
{ x: 0, y: 660, k: 2.8, data: `575 895,588 893,595 850,603 790,615 782,622 830,630 885,640 895,662 895,680 855,690 800,700 775,708 770,718 805,728 820,740 780,755 762,765 785,775 803,787 795,795 775,805 795,818 812,830 800,842 753,850 780,860 830,870 865,885 878,905 885,925 890,940 895,975 895,985 885,1000 835,1012 827,1022 840,1032 870,1042 890,1055 883,1070 885,1080 892,1090 840,1100 740,1108 620,1120 550,1126 523,1135 560,1145 610,1160 660,1180 690,1200 750,1215 785,1230 815,1245 845,1265 870,1290 890,1312 888,1322 860,1335 800,1345 778,1355 772,1370 785,1380 808,1395 820,1405 813,1418 835,1430 875,1445 890,1475 893,1505 890,1520 880,1540 870` },
{ x: 560, y: 740, k: 2.8, data: `0 622,10 618,28 630,40 615,55 605,72 590,85 550,95 525,105 513,120 525,135 560,150 600,157 602,170 550,180 470,190 447,200 450,212 495,230 545,250 590,265 625,285 642,300 633,320 632,340 643,360 640,372 635,382 580,390 545,402 533,412 550,425 600,435 632,453 615,465 625,480 648,495 625,515 600,525 603,540 580,552 550,565 560,580 553,607 547,617 520,628 455,636 390,645 340,655 298,672 280,690 287,710 300,722 292,733 283,745 315,760 365,780 380,798 372,815 390,835 410,855 410,872 412,882 375,890 310,903 262,920 255,940 260,955 280,970 315,985 350,1000 380,1010 430,1025 465,1038 430,1050 380,1065 335,1075 270,1085 253,1095 265,1105 310,1113 350,1122 340,1140 355,1150 400,1165 400,1180 430,1195 480,1208 500,1217 498,1225 458,1242 447,1250 480,1260 515,1270 545,1285 560,1300 535,1307 460,1315 350,1322 270,1329 243,1338 280,1350 350,1368 420,1380 408,1398 403,1412 415,1425 445,1445 485,1457 498,1468 490,1480 460,1495 420,1508 405,1520 380,1530 385,1540 368,1552 410` },
{ x: 1120, y: 640, k: 2.775, data: `0 778,15 766,30 780,45 800,62 825,73 850,84 855,95 835,110 812,125 820,140 808,153 777,165 785,175 820,190 850,210 855,225 880,238 893,258 895,280 912,300 913,335 928,370 930,395 932,415 937,428 925,440 885,470 878,485 855,497 835,520 840,540 862,555 875,570 915,582 928,600 913,618 918,635 903,650 895,665 900,685 937,715 938,740 945,770 946,795 925,818 928,826 880,833 780,842 640,848 580,855 565,862 600,873 650,885 640,895 665,905 705,912 765,925 805,945 845,975 875,995 882,1030 915,1075 918,1100 937,1150 945,1210 945,1250 955,1320 955,1350 957,1393 957` }
], '#00f');
path(ind, 'M327 138h9v55h-9zM1396 138h9v55h-9zM1413 138h9v55h-9zM1407 110h6v9h-6z', { fill: '#ff0' });
path(ind, 'M1407 94h4v8h-4z', { fill: '#f00' });
path(ind, 'M1407 102h4v8h-4z', { fill: '#f0f' });
path(ind, 'M1224 61h5v2h-5z', { fill: '#fff' });
place('indicator-labels', 1431, 201, TOP, [
  [530, 889, '跟庄买', 'yellow'], [1599, 889, '跟庄买', 'yellow'], [1615, 889, '跟庄买', 'yellow'], [1609, 847, '共振', 'yellow']
]);
byId('indicator-scale').innerHTML = [100, 80, 60, 40, 20].map(v =>
  `<i style="top:${indY(v) / 2.01}%"></i><span style="top:${indY(v) / 2.01}%">${v === 100 ? '100.0' : v + '.00'}</span>`).join('');

/* Month marks */
byId('dates').innerHTML = [[201, '2022年', 'year'], [309, 7], [380, 8], [458, 9], [529, 10], [583, 11], [658, 12], [732, 1], [786, 2], [854, 3], [932, 4], [996, 5], [1064, 6], [1132, 7], [1203, 8], [1280, 9], [1348, 10], [1406, 11], [1480, 12], [1552, 1], [1607, '--', 'cursor']]
  .map(([x, t, c = '']) => `<span class="${c}" style="left:${(x - LEFT) / 14.31}%">${t}</span>`).join('');
```
